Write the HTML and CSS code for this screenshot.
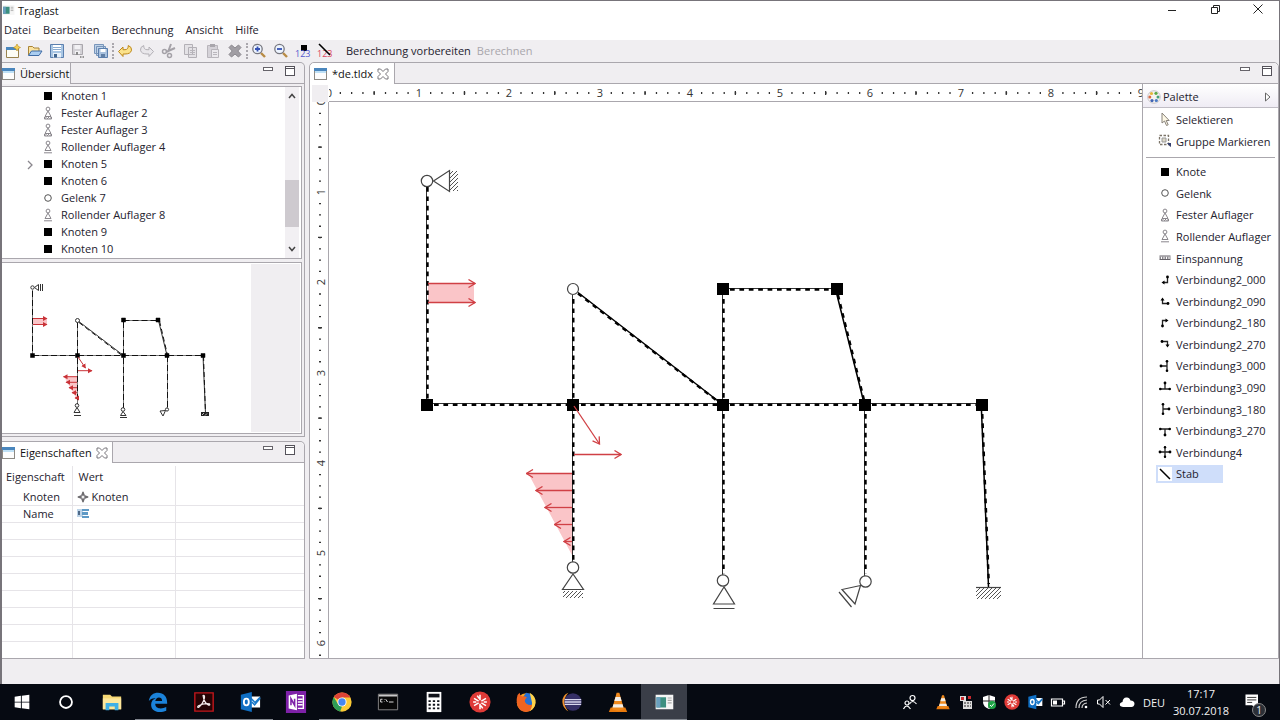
FILE: index.html
```html
<!DOCTYPE html>
<html lang="de">
<head>
<meta charset="utf-8">
<title>Traglast</title>
<link rel="stylesheet" href="styles.css">
</head>
<body>
<svg class="defs" aria-hidden="true">
  <defs>
    <symbol id="view" viewBox="0 0 14 14"><rect x=".5" y="1.5" width="12" height="11" fill="#fdfdfd" stroke="#8d8a84"/><path d="M0 1h13v3H0z" fill="#4a86bd"/><path d="M1 4h11v2H1z" fill="#bfe0f5"/></symbol>
    <symbol id="close-x" viewBox="0 0 12 12"><path d="M1 1h2.500l2.500 2.500L8.500 1H11v2.500L8.500 6 11 8.500V11H8.500L6 8.500 3.500 11H1V8.500L3.500 6 1 3.500z" fill="#fff" stroke="#77747a"/></symbol>
    <symbol id="min" viewBox="0 0 12 12"><rect x="1.500" y="2.500" width="9" height="3" fill="#fff" stroke="#66636a"/></symbol>
    <symbol id="max" viewBox="0 0 12 12"><rect x="1.500" y="1.500" width="9" height="9" fill="#fff" stroke="#55525a"/><path d="M1 3.500h10" stroke="#55525a"/></symbol>
    <symbol id="knoten" viewBox="0 0 14 14"><path d="M3 3h8v8H3z"/></symbol>
    <symbol id="gelenk" viewBox="0 0 14 14"><circle cx="7" cy="7" r="3.300" fill="#fff" stroke="#555"/></symbol>
    <symbol id="fest" viewBox="0 0 14 14"><g fill="none" stroke="#8a878d"><circle cx="7" cy="3" r="1.900"/><path d="M7 5 4 10.500h6zM3.500 13l2-2M6 13l2-2M8.500 13l2-2M3.500 11v2h7v-2"/></g></symbol>
    <symbol id="roll" viewBox="0 0 14 14"><g fill="none" stroke="#8a878d"><circle cx="7" cy="3" r="1.900"/><path d="M7 5 4 10.500h6zM3 12.800h8"/></g></symbol>
    <symbol id="einsp" viewBox="0 0 14 14"><path d="M1.500 5h11M1.500 8.500h11" stroke="#66636a"/><path d="M1.500 6.800h11" stroke="#8a878d" stroke-width="2.500" stroke-dasharray="1.500 1"/></symbol>
    <symbol id="v2" viewBox="0 0 14 14"><path d="M9.500 4v5.500H5" fill="none" stroke="#222" stroke-width="1.300"/><circle cx="9.500" cy="4" r="1.400"/><path d="M6.500 7.500v4L3.500 9.500z"/></symbol>
    <symbol id="v3" viewBox="0 0 14 14"><path d="M9 2v10M3 7h6" stroke="#222" stroke-width="1.300"/><circle cx="9" cy="2.300" r="1.300"/><circle cx="9" cy="11.700" r="1.300"/><circle cx="3" cy="7" r="1.400"/></symbol>
    <symbol id="v4" viewBox="0 0 14 14"><path d="M7 1.500v11M1 7h12" stroke="#222" stroke-width="1.300"/><circle cx="7" cy="2.200" r="1.200"/><circle cx="7" cy="11.800" r="1.200"/><circle cx="2" cy="7" r="1.400"/><circle cx="12" cy="7" r="1.400"/></symbol>
    <symbol id="vlc" viewBox="0 0 24 24"><path d="M4 18h16l2 5H2z" fill="#e8790c"/><path d="M10.500 2h3l5 18q-6.500 3-13 0z" fill="#f08a1d"/><path d="M9.300 6.500h5.400l1.200 4.500H8zM7 14.500h10l1 3.500H6z" fill="#f3efe9"/></symbol>
    <symbol id="starred" viewBox="0 0 24 24"><circle cx="12" cy="12" r="11.500" fill="#df3a37"/><path d="M12 4v6M5.500 8l5 3M18.500 8l-5 3M12 14v6M5.500 16l5-3M18.500 16l-5-3M9 5l2 3M15 19l-2-3M4.500 12H8M16 12h3.500" stroke="#fff" stroke-width="1.700"/></symbol>
    <symbol id="outlook" viewBox="0 0 24 24"><path d="M12 6h11v12H12z" fill="#fff"/><path d="M12 7l5.500 5.500L23 7M14 12l3 3 6-7" fill="none" stroke="#1979ca" stroke-width="1.700"/><path d="M2 4 14 1v22L2 20z" fill="#0f6fc4"/><ellipse cx="8" cy="12" rx="2.700" ry="3.700" fill="none" stroke="#fff" stroke-width="2"/></symbol>
    <symbol id="app" viewBox="0 0 24 20"><path d="M1 1h22v18H1z" fill="#f5f5f5"/><path d="M2 4h12v13H2z" fill="#3c8f80"/><path d="M2 4h5v13H2z" fill="#6a9fbf"/><path d="M16 5h5M16 8h5M16 11h5" stroke="#aaa" stroke-width="1.500"/></symbol>
    <marker id="tip" viewBox="0 0 9 10" refX="8" refY="5" markerWidth="9" markerHeight="10" markerUnits="userSpaceOnUse" orient="auto"><path d="M1.500 1 8 5 1.500 9" fill="none" stroke="#d04045" stroke-width="1.300"/></marker>
    <marker id="tip-small" viewBox="0 0 5 6" refX="4" refY="3" markerWidth="5" markerHeight="6" markerUnits="userSpaceOnUse" orient="auto"><path d="M0 .500 4.500 3 0 5.500z" fill="#c93237"/></marker>
    <pattern id="hatch" width="4" height="4" patternUnits="userSpaceOnUse"><path d="M-1 1l2-2M0 4l4-4M3 5l2-2" stroke="#555"/></pattern>
  </defs>
</svg>

<div class="window">
  <header class="titlebar">
    <svg class="app-icon"><use href="#app"/></svg>
    <h1 class="title">Traglast</h1>
    <div class="window-controls">
      <button class="wc" aria-label="Minimieren"><svg viewBox="0 0 12 12"><path d="M2 7.500h8" stroke="#222"/></svg></button>
      <button class="wc" aria-label="Wiederherstellen"><svg viewBox="0 0 12 12"><path d="M2.500 4.500h6v6h-6zM4.500 4V2.500h6v6H9" fill="none" stroke="#222"/></svg></button>
      <button class="wc" aria-label="Schließen"><svg viewBox="0 0 12 12"><path d="M1.500 1.500l9 9M10.500 1.500l-9 9" stroke="#222"/></svg></button>
    </div>
  </header>

  <nav class="menubar">
    <button>Datei</button><button>Bearbeiten</button><button>Berechnung</button><button>Ansicht</button><button>Hilfe</button>
  </nav>

  <div class="toolbar">
    <button class="tool" aria-label="Neu"><svg viewBox="0 0 16 16"><path d="M1.500 4.500h12v10h-12z" fill="#fdfdf6" stroke="#99834f"/><path d="M1 4h11v3H1z" fill="#4a86bd"/><path d="M12 1l1.200 2.300L15.500 4.500l-2.300 1.200L12 8l-1.200-2.300L8.500 4.500l2.300-1.200z" fill="#f3cf55" stroke="#b98b20" stroke-width=".6"/></svg></button>
    <button class="tool" aria-label="Öffnen"><svg viewBox="0 0 16 16"><path d="M1.500 12V3.500h4L7 5h5v3" fill="#fbe3a0" stroke="#a98436"/><path d="M1.500 12.500 4.500 8h10.500l-3 4.500z" fill="#aacdf0" stroke="#3f6ca5"/></svg></button>
    <button class="tool" aria-label="Speichern"><svg viewBox="0 0 16 16"><path d="M1.500 1.500h13v13h-13z" fill="#a9c6e4" stroke="#5b7fae"/><path d="M4 2h8v6H4z" fill="#fff"/><path d="M4 4.500h8M4 6.500h8" stroke="#8aabd0"/><path d="M4 10h8v4.500H4z" fill="#e8f0f8"/><path d="M5 11h3v3.500H5z" fill="#41658f"/></svg></button>
    <button class="tool" aria-label="Speichern unter" disabled><svg viewBox="0 0 16 16"><path d="M1.500 1.500h10v10h-10z" fill="#d3d1d6" stroke="#aaa7ad"/><path d="M3.500 2h6v4h-6zM4 8h5v3H4z" fill="#f2f1f4"/><path d="M5 9h2v3H5z" fill="#888"/><path d="M9 14h5" stroke="#777" stroke-width="1.500" stroke-dasharray="1.500 1"/></svg></button>
    <button class="tool" aria-label="Alle speichern"><svg viewBox="0 0 16 16"><path d="M1.500 1.500h9v9h-9zM3.500 3.500h9v9h-9z" fill="#bfd2e8" stroke="#7895ba"/><path d="M5.500 5.500h9v9h-9z" fill="#a9c1de" stroke="#5b7fae"/><path d="M7.500 6h5v3h-5z" fill="#fff"/><path d="M8 11h4v3.500H8z" fill="#607fa6"/></svg></button>
    <span class="tool-sep"></span>
    <button class="tool" aria-label="Rückgängig"><svg viewBox="0 0 16 16"><path d="M1.500 8.500 6 4v2.700h2q3.300 0 3.300-4.200 3.700 1.500 3.200 4.700-.800 3.800-6.500 3.800H6v2.500z" fill="#fbe28b" stroke="#bd8719"/></svg></button>
    <button class="tool" aria-label="Wiederholen" disabled><svg viewBox="0 0 16 16"><path d="M14.500 8.500 10 4v2.700H8Q4.700 6.700 4.700 2.500 1 4 1.500 7.200 2.300 11 8 11h2v2.500z" fill="#e9e7eb" stroke="#b3b0b6"/></svg></button>
    <button class="tool" aria-label="Ausschneiden" disabled><svg viewBox="0 0 16 16"><path d="M10 1 7 9M14 5 5 9" stroke="#a5a2a8" stroke-width="2"/><g fill="none" stroke="#a5a2a8" stroke-width="1.500"><circle cx="3.500" cy="8.500" r="2"/><circle cx="8.500" cy="12.500" r="2"/></g></svg></button>
    <button class="tool" aria-label="Kopieren" disabled><svg viewBox="0 0 16 16"><path d="M1.500 1.500h8v10h-8zM5.500 4.500h8v10h-8z" fill="#e4e2e6" stroke="#b3b0b6"/><path d="M7 7.500h5M7 9.500h5M7 11.500h5" stroke="#b9b6bc"/></svg></button>
    <button class="tool" aria-label="Einfügen" disabled><svg viewBox="0 0 16 16"><path d="M2.500 2.500h10v12h-10z" fill="#d5d2d8" stroke="#b8b5bb"/><path d="M5 1h5v3H5z" fill="#a9a6ac"/><path d="M6.500 6.500h7v8h-7z" fill="#ebe9ed" stroke="#b8b5bb"/><path d="M8 9.500h4M8 11.500h4" stroke="#b9b6bc"/></svg></button>
    <button class="tool" aria-label="Löschen" disabled><svg viewBox="0 0 16 16"><path d="M2 4.500 4.500 2 8 5l3.500-3L14 4.500 10.800 8 14 11.500 11.500 14 8 11l-3.500 3L2 11.500 5.200 8z" fill="#a19ea4" stroke="#8b888e"/></svg></button>
    <span class="tool-sep"></span>
    <button class="tool" aria-label="Vergrößern"><svg viewBox="0 0 16 16"><path d="M10 10l4 4" stroke="#b88b45" stroke-width="2.400"/><circle cx="6.500" cy="6" r="4.700" fill="#edf4ff" stroke="#77777f" stroke-width="1.300"/><path d="M4 6h5M6.500 3.500v5" stroke="#3652b5" stroke-width="1.800"/></svg></button>
    <button class="tool" aria-label="Verkleinern"><svg viewBox="0 0 16 16"><path d="M10 10l4 4" stroke="#b88b45" stroke-width="2.400"/><circle cx="6.500" cy="6" r="4.700" fill="#edf4ff" stroke="#77777f" stroke-width="1.300"/><path d="M4 6h5" stroke="#3652b5" stroke-width="1.800"/></svg></button>
    <button class="tool" aria-label="Knotennummern"><svg viewBox="0 0 16 16"><path d="M6 2h6v6H6z"/><text class="num blue" x="0" y="14">123</text></svg></button>
    <button class="tool" aria-label="Stabnummern"><svg viewBox="0 0 16 16"><text class="num red" x="0" y="14">123</text><path d="M2 1l11 11" stroke="#000" stroke-width="1.600"/></svg></button>
    <button class="tool-text">Berechnung vorbereiten</button>
    <button class="tool-text second" disabled>Berechnen</button>
  </div>

  <main class="workbench">
    <div class="side">
      <section class="panel overview">
        <div class="tabs"><div class="tab"><svg class="i14"><use href="#view"/></svg><span>Übersicht</span></div>
          <div class="tab-tools"><button aria-label="Minimieren"><svg><use href="#min"/></svg></button><button aria-label="Maximieren"><svg><use href="#max"/></svg></button></div></div>
        <div class="tree-box">
          <ul class="tree" role="tree">
            <li role="treeitem"><svg class="i14"><use href="#knoten"/></svg>Knoten 1</li>
            <li role="treeitem"><svg class="i14"><use href="#fest"/></svg>Fester Auflager 2</li>
            <li role="treeitem"><svg class="i14"><use href="#fest"/></svg>Fester Auflager 3</li>
            <li role="treeitem"><svg class="i14"><use href="#roll"/></svg>Rollender Auflager 4</li>
            <li role="treeitem" aria-expanded="false"><svg class="twisty" viewBox="0 0 8 10"><path d="M2 1l4 4-4 4" fill="none" stroke="#8a878d" stroke-width="1.300"/></svg><svg class="i14"><use href="#knoten"/></svg>Knoten 5</li>
            <li role="treeitem"><svg class="i14"><use href="#knoten"/></svg>Knoten 6</li>
            <li role="treeitem"><svg class="i14"><use href="#gelenk"/></svg>Gelenk 7</li>
            <li role="treeitem"><svg class="i14"><use href="#roll"/></svg>Rollender Auflager 8</li>
            <li role="treeitem"><svg class="i14"><use href="#knoten"/></svg>Knoten 9</li>
            <li role="treeitem"><svg class="i14"><use href="#knoten"/></svg>Knoten 10</li>
          </ul>
          <div class="scrollbar">
            <svg viewBox="0 0 14 16"><path d="M4 11l3-3.500 3 3.500" fill="none" stroke="#444" stroke-width="1.500"/></svg>
            <div class="track"><div class="thumb"></div></div>
            <svg viewBox="0 0 14 16"><path d="M4 5l3 3.500L10 5" fill="none" stroke="#444" stroke-width="1.500"/></svg>
          </div>
        </div>
        <div class="mini-box">
          <svg class="mini" role="img" aria-label="Miniaturansicht des Tragwerks"><g transform="translate(-2 -263)">
            <g fill="#fac5c8"><path d="M33 318.500h14v6H33zM77.500 376.500H64l13.500 24z"/></g>
            <g stroke="#777" fill="none"><path d="M32.500 290v65.500M32.500 355.500h170.500M77.500 320.500V406M123.500 355.500V320.500h35M123.500 355.500V409M167.500 355.500V409"/></g>
            <g stroke="#111" fill="none" stroke-dasharray="6 3"><path d="M32.500 291v64M33 355.500h170M77.500 322v83M123.500 320.500h35M123.500 322v87M167.500 356v53"/></g>
            <path d="M77.500 320.500l46 35M158.500 320.500l8.500 35M203 355.500l2.500 58" stroke="#333"/>
            <path d="M79 322.500l43 33M159.500 321l8 34M203.500 356l2 57" stroke="#111" stroke-dasharray="5 3"/>
            <path d="M30.500 353.500h4v4h-4zM75.500 353.500h4v4h-4zM121.500 353.500h4v4h-4zM165 353.500h4v4h-4zM201 353.500h4v4h-4zM121.500 318h4v4h-4zM156 318h4v4h-4z" stroke="#000" stroke-width=".5"/>
            <g stroke="#c93237"><path d="M33 318.500h14" marker-end="url(#tip-small)"/><path d="M33 324.500h14" marker-end="url(#tip-small)"/><path d="M78 357l7.500 11" marker-end="url(#tip-small)"/><path d="M78 370.700h14" marker-end="url(#tip-small)"/><path d="M77 376.700H63.500" marker-end="url(#tip-small)"/><path d="M77 382.300H66" marker-end="url(#tip-small)"/><path d="M77 387.700h-8" marker-end="url(#tip-small)"/><path d="M77 392.700h-5" marker-end="url(#tip-small)"/><path d="M77 398h-2" marker-end="url(#tip-small)"/></g>
            <g stroke="#333" fill="#fff"><circle cx="77.500" cy="320.500" r="2"/><circle cx="32.500" cy="287.500" r="1.700"/><path d="M34.500 287.500l4-3v6zM40.500 284v7M42.500 284v7"/><circle cx="77" cy="405.500" r="1.800"/><path d="M77 407.500l-3 5h6zM74 415.500h7"/><circle cx="123" cy="409.500" r="1.800"/><path d="M123 411.500l-2.500 4h5.500zM120 417.500h7"/><circle cx="167" cy="409.500" r="1.600"/><path d="M165.500 410.500l-5.500.5 3 5z"/></g>
            <path d="M201 412h8v4h-8z" fill="#222"/><path d="M202 415l2-2M205 415.500l2-2" stroke="#fff" stroke-width=".7"/>
          </g></svg>
          <div class="mini-rest"></div>
        </div>
      </section>

      <section class="panel properties">
        <div class="tabs"><div class="tab"><svg class="i14"><use href="#view"/></svg><span>Eigenschaften</span><button class="tab-close" aria-label="Schließen"><svg><use href="#close-x"/></svg></button></div>
          <div class="tab-tools"><button aria-label="Minimieren"><svg><use href="#min"/></svg></button><button aria-label="Maximieren"><svg><use href="#max"/></svg></button></div></div>
        <table class="props">
          <colgroup><col class="c-key"><col class="c-val"><col></colgroup>
          <thead><tr><th>Eigenschaft</th><th>Wert</th><th></th></tr></thead>
          <tbody>
            <tr><td>Knoten</td><td><svg class="i14" viewBox="0 0 14 14"><path d="M7 1l2 4 4 2-4 2-2 4-2-4-4-2 4-2z" fill="#88858b"/><path d="M7 2v10M2 7h10" stroke="#555"/><circle cx="7" cy="7" r="1.500" fill="#eee"/></svg>Knoten</td><td></td></tr>
            <tr><td>Name</td><td><svg class="i14" viewBox="0 0 14 14"><path d="M1 2h6v8H1z" fill="#bcd3e8"/><path d="M6 2h7v2H6zM6 5h6v3H6zM6 9h7v2H6z" fill="#5f9ac6"/><path d="M3 4v4" stroke="#2a4668" stroke-width="1.500"/></svg></td><td></td></tr>
            <tr><td></td><td></td><td></td></tr><tr><td></td><td></td><td></td></tr><tr><td></td><td></td><td></td></tr><tr><td></td><td></td><td></td></tr><tr><td></td><td></td><td></td></tr><tr><td></td><td></td><td></td></tr><tr><td></td><td></td><td></td></tr><tr class="last"><td></td><td></td><td></td></tr>
          </tbody>
        </table>
      </section>
    </div>

    <section class="panel editor">
      <div class="tabs"><div class="tab"><svg class="i14"><use href="#view"/></svg><span>*de.tldx</span><button class="tab-close" aria-label="Schließen"><svg><use href="#close-x"/></svg></button></div>
        <div class="tab-tools"><button aria-label="Minimieren"><svg><use href="#min"/></svg></button><button aria-label="Maximieren"><svg><use href="#max"/></svg></button></div></div>
      <div class="editor-body">
        <div class="corner"></div>
        <svg class="ruler-h" aria-hidden="true">
          <path d="M10.700 9H900" stroke="#333" stroke-width="2" stroke-dasharray="1.300 9.990"/>
          <path d="M44.500 9H900" stroke="#333" stroke-width="4" stroke-dasharray="1.300 89"/>
          <g class="mask"><path d="M85 3h11v12H85zM175 3h11v12h-11zM265 3h11v12h-11zM356 3h11v12h-11zM446 3h11v12h-11zM536 3h11v12h-11zM627 3h11v12h-11zM717 3h11v12h-11zM806 3h11v12h-11z"/></g>
          <g class="ticks"><text x="0" y="13">0</text><text x="90" y="13">1</text><text x="180" y="13">2</text><text x="271" y="13">3</text><text x="361" y="13">4</text><text x="451" y="13">5</text><text x="541" y="13">6</text><text x="632" y="13">7</text><text x="722" y="13">8</text><text x="812" y="13">9</text></g>
        </svg>
        <svg class="ruler-v" aria-hidden="true">
          <path d="M10 10.700V700" stroke="#333" stroke-width="2" stroke-dasharray="1.300 9.990"/>
          <path d="M10 44.500V700" stroke="#333" stroke-width="4" stroke-dasharray="1.300 89"/>
          <g class="mask"><path d="M2 85h14v11H2zM2 175h14v11H2zM2 265h14v11H2zM2 356h14v11H2zM2 446h14v11H2zM2 536h14v11H2z"/></g>
          <g class="ticks" transform="rotate(-90)"><text x="0" y="15">0</text><text x="-90" y="15">1</text><text x="-180" y="15">2</text><text x="-271" y="15">3</text><text x="-361" y="15">4</text><text x="-451" y="15">5</text><text x="-541" y="15">6</text></g>
        </svg>
        <svg class="canvas" role="img" aria-label="Tragwerk"><g transform="translate(-329 -102)">
          <g fill="#fac5c8"><path d="M428 283h46v19h-46zM573 473h-45l44 82z"/></g>
          <g stroke="#333" stroke-width="1">
            <path d="M426.500 187v212M433 403.500h543M572.500 295v267M723 288.500h108M722.500 295v280M864.500 411v166" fill="none"/>
          </g>
          <path d="M578 292.500l142 110M836.500 293l27 108M981.500 411l7 176" stroke="#000" stroke-width="1.500"/>
          <g fill="none" stroke="#000" stroke-width="2.400" stroke-dasharray="4.700 4.700">
            <path d="M427.500 187v212M434 404.800h134M581 404.800h136M730 404.800h129M872 404.800h105M573.300 299v102M573.300 414v146M723.500 299v102M723.500 414v160M730 289.500h101M865.500 414v160"/>
            <path d="M578 293.500l140 108M838 295l26 105M982.300 414l6.500 170"/>
          </g>
          <path d="M421 399h12v12h-12zM567 399h12v12h-12zM717 399h12v12h-12zM859 399h12v12h-12zM976 399h12v12h-12zM717 283h12v12h-12zM831 283h12v12h-12z"/>
          <g stroke="#d04045" stroke-width="1.300" fill="none">
            <path d="M428 283.500h47" marker-end="url(#tip)"/><path d="M428 302.500h47" marker-end="url(#tip)"/>
            <path d="M574 406l25.500 38" marker-end="url(#tip)"/><path d="M574 454.500h47" marker-end="url(#tip)"/>
            <path d="M572 473.500h-45.500" marker-end="url(#tip)"/><path d="M572 490.500h-36" marker-end="url(#tip)"/><path d="M572 507.500h-27" marker-end="url(#tip)"/><path d="M572 524.500h-17.500" marker-end="url(#tip)"/><path d="M572 541.500h-8" marker-end="url(#tip)"/>
          </g>
          <g fill="#fff" stroke="#444" stroke-width="1.200">
            <circle cx="427" cy="181" r="5.700"/><path d="M433.500 181l16-10.500v21z"/>
            <circle cx="573" cy="289" r="5.500"/>
            <circle cx="573" cy="567.500" r="5.700"/><path d="M573 574l-10.500 15.500h21z"/>
            <circle cx="723" cy="580.500" r="5.700"/><path d="M724 587l-10.500 17h21zM713.500 608.500h21"/>
            <path d="M860.500 585.500l-18.500 4 13 14.500zM839 592l12.500 15"/><circle cx="865.500" cy="581.500" r="5.700"/>
            <path d="M976 587.500h25"/>
          </g>
          <path d="M450 171h8v20h-8zM563 591h20v7h-20zM976 588h25v11h-25z" fill="url(#hatch)"/>
        </g></svg>
        <aside class="palette">
          <div class="palette-head"><svg class="i14" viewBox="0 0 14 14"><circle cx="7" cy="7" r="6.300" fill="#f5f3ef" stroke="#c9c6cc"/><circle cx="4.500" cy="3.500" r="1.600" fill="#e2b73b"/><circle cx="9" cy="3.300" r="1.600" fill="#5daa48"/><circle cx="11" cy="7" r="1.500" fill="#43a078"/><circle cx="9.300" cy="10.500" r="1.600" fill="#4979c5"/><circle cx="5" cy="10.600" r="1.600" fill="#3f62b3"/><circle cx="2.800" cy="7" r="1.500" fill="#d96a45"/></svg><span>Palette</span><button aria-label="Palette einklappen"><svg viewBox="0 0 8 10"><path d="M1.500 1v8l4.500-4z" fill="#fff" stroke="#666"/></svg></button></div>
          <div class="palette-tools">
            <button><svg class="i14" viewBox="0 0 14 14"><path d="M4 1v10l2.500-2 2 4.500 1.700-.7-2-4.300h3z" fill="#fdf8e6" stroke="#88827a"/></svg>Selektieren</button>
            <button><svg class="i14" viewBox="0 0 14 14"><path d="M1.500 1.500h9v9h-9z" fill="none" stroke="#7c7468" stroke-width="1.300" stroke-dasharray="2.500 1.500"/><path d="M4 4h4v4H4z" fill="#ddd8c8" stroke="#999"/><path d="M9 9h4v4l-1.500-1z" fill="#35406e"/></svg>Gruppe Markieren</button>
          </div>
          <div class="palette-list">
            <button><svg class="i14"><use href="#knoten"/></svg>Knote</button>
            <button><svg class="i14"><use href="#gelenk"/></svg>Gelenk</button>
            <button><svg class="i14"><use href="#fest"/></svg>Fester Auflager</button>
            <button><svg class="i14"><use href="#roll"/></svg>Rollender Auflager</button>
            <button><svg class="i14"><use href="#einsp"/></svg>Einspannung</button>
            <button><svg class="i14"><use href="#v2"/></svg>Verbindung2_000</button>
            <button><svg class="i14 r90"><use href="#v2"/></svg>Verbindung2_090</button>
            <button><svg class="i14 r180"><use href="#v2"/></svg>Verbindung2_180</button>
            <button><svg class="i14 r270"><use href="#v2"/></svg>Verbindung2_270</button>
            <button><svg class="i14"><use href="#v3"/></svg>Verbindung3_000</button>
            <button><svg class="i14 r90"><use href="#v3"/></svg>Verbindung3_090</button>
            <button><svg class="i14 r180"><use href="#v3"/></svg>Verbindung3_180</button>
            <button><svg class="i14 r270"><use href="#v3"/></svg>Verbindung3_270</button>
            <button><svg class="i14"><use href="#v4"/></svg>Verbindung4</button>
            <button class="selected" aria-pressed="true"><svg class="i14" viewBox="0 0 14 14"><path d="M2 2l10 10" stroke="#000" stroke-width="1.500"/></svg>Stab</button>
          </div>
        </aside>
      </div>
    </section>
  </main>
  <footer class="statusbar"></footer>
</div>

<nav class="taskbar">
  <button class="start" aria-label="Start"><svg viewBox="0 0 24 24"><path d="M4 6.300l6.800-1v6.300H4zM11.800 5.200 20 4v7.600h-8.200zM4 12.500h6.800v6.300L4 17.800zM11.800 12.500H20V20l-8.200-1.200z" fill="#fff"/></svg></button>
  <button aria-label="Cortana"><svg viewBox="0 0 24 24"><circle cx="12" cy="12" r="6.500" fill="none" stroke="#fff" stroke-width="2"/></svg></button>
  <button aria-label="Explorer"><svg viewBox="0 0 24 24"><path d="M2 4h8l2 2h10v14H2z" fill="#f6d874"/><path d="M2 8h20v12H2z" fill="#fde79b"/><path d="M5 13h14v8h-4v-4H9v4H5z" fill="#40b0e6"/></svg></button>
  <button class="run" aria-label="Edge"><svg viewBox="0 0 24 24"><path d="M2 11C3 4.500 7 2 12 2c6 0 10 4 10 11v1H9c0 4 3 5 6 5 2 0 4-.5 6-1.500v4C19 22.500 16.500 23 14 23c-6 0-9.500-3.500-9.500-8 0-3.500 2-6 5-7-3.500-.5-6 1-7.500 3zm7 0h7.500c0-3-1.500-4-3.500-4s-3.500 1.500-4 4z" fill="#1b83da"/></svg></button>
  <button class="run" aria-label="Acrobat"><svg viewBox="0 0 24 24"><path d="M2 2h20v20H2z" fill="#250405" stroke="#c4171c" stroke-width="1.500"/><path d="M11 5q2-1 1.500 2.500Q11 14 6 18q-2 0 0-2 6-3 12-2 1 1.500-1 1.500Q12 13 11 5z" fill="none" stroke="#f3eaea" stroke-width="1.300"/></svg></button>
  <button class="run" aria-label="Outlook"><svg><use href="#outlook"/></svg></button>
  <button aria-label="OneNote"><svg viewBox="0 0 24 24"><path d="M1 0h22v24H1z" fill="#7e21a8"/><path d="M4 5l9-2v18l-9-2z" fill="#fff"/><path d="M6.500 15.500v-7l4 7v-7" fill="none" stroke="#7e21a8" stroke-width="1.700"/><path d="M14 5h6v14h-6M14 9h5M14 12h5M14 15h5" fill="none" stroke="#fff" stroke-width="1.500"/></svg></button>
  <button class="run" aria-label="Chrome"><svg viewBox="0 0 24 24"><circle cx="12" cy="12" r="10.500" fill="#fbca35"/><path d="M12 12 3 6.600A10.500 10.500 0 0 1 21.200 7H12z" fill="#dc4437"/><path d="M3 6.600 7.700 14.500 12 17l-2 5.300A10.500 10.500 0 0 1 3 6.600z" fill="#2e9e57"/><circle cx="12" cy="12" r="5" fill="#fff"/><circle cx="12" cy="12" r="4" fill="#4587f0"/></svg></button>
  <button class="run" aria-label="Eingabeaufforderung"><svg viewBox="0 0 24 24"><path d="M1.500 3.500h21v17h-21z" fill="#080808" stroke="#8b8b8b"/><path d="M2 4h20v2H2z" fill="#c9c9c9"/><path d="M4 9h2M4 9v3h2M8 9v.500M8 11.500v.500M9.500 9l2 3M13 12h5" stroke="#eee" fill="none"/></svg></button>
  <button class="run" aria-label="Rechner"><svg viewBox="0 0 24 24"><path d="M4 1h16v22H4z" fill="#fff"/><path d="M6 3h12v4H6z" fill="#10131a"/><path d="M6 11h12M6 15h12M6 19h12" stroke="#10131a" stroke-width="2" stroke-dasharray="2.500 2.200"/></svg></button>
  <button class="run" aria-label="Aufnahme"><svg><use href="#starred"/></svg></button>
  <button class="run" aria-label="Firefox"><svg viewBox="0 0 24 24"><circle cx="12" cy="12.500" r="10" fill="#f8a522"/><path d="M12 2q9 1 10 9-1 4-6 5-7-2-8-8z" fill="#2571d4"/><path d="M2 8q0-4 3-6 0 3 3 4 2-1 5 1-3 2-2 5 2 4 7 3 3-2 3-5 2 6-2 10-6 5-13 1Q1 16 2 8z" fill="#ef6421"/><path d="M16 2q7 4 6.500 11-1 6-6.500 9 4-6 2-12z" fill="#ffd34a"/></svg></button>
  <button class="run" aria-label="Eclipse"><svg viewBox="0 0 24 24"><path d="M8 2Q1 5 1.500 12T8 22Q4 18 4 12T8 2z" fill="#f2922c"/><circle cx="13" cy="12" r="9.500" fill="#352f66"/><path d="M4 9.500h18M4 12h18M4 14.500h18" stroke="#d9d8ee" stroke-width="1.400"/></svg></button>
  <button class="run" aria-label="VLC"><svg><use href="#vlc"/></svg></button>
  <button class="run active" aria-label="Traglast"><svg viewBox="0 0 24 24"><use href="#app" x="2" y="3" width="21" height="18"/></svg></button>

  <div class="tray">
    <button class="people" aria-label="Kontakte"><svg viewBox="0 0 16 16"><g fill="none" stroke="#fff" stroke-width="1.200"><circle cx="10.500" cy="4" r="2.500"/><path d="M7.500 10q3-5 7 0"/><circle cx="5" cy="9" r="2"/><path d="M1.500 15q3-6 7 0"/></g></svg></button>
    <button aria-label="VLC"><svg><use href="#vlc"/></svg></button>
    <button aria-label="Netzwerkdienst"><svg viewBox="0 0 16 16"><path d="M2 2h6v5H2zM5 7h9v8H5z" fill="#ddd"/><path d="M3 3h3v3H3zM10 2h3v3h-3z" fill="#c9282d"/><path d="M6 9h7M6 12h7" stroke="#222" stroke-dasharray="2 1"/></svg></button>
    <button aria-label="Windows Defender"><svg viewBox="0 0 16 16"><path d="M8 1l6 2v5q0 5-6 7-6-2-6-7V3z" fill="#fff"/><path d="M8 1v13M2 7h12" stroke="#222" stroke-width="1"/><circle cx="11" cy="11" r="4" fill="#1fa346"/><path d="M9 11l1.500 1.500L13 9.500" fill="none" stroke="#fff"/></svg></button>
    <button aria-label="Aufnahme"><svg><use href="#starred"/></svg></button>
    <button aria-label="Outlook"><svg><use href="#outlook"/></svg></button>
    <button aria-label="Akku"><svg viewBox="0 0 16 16"><path d="M1.500 5h11v7h-11zM13 7h1.500v3H13" fill="none" stroke="#fff" stroke-width="1.200"/><path d="M3 6.500h4v4H3z" fill="#fff"/></svg></button>
    <button aria-label="WLAN"><svg viewBox="0 0 16 16"><g fill="none" stroke="#ccc" stroke-width="1.200"><path d="M3 14Q3 3 14 3M6 14q0-7.500 8-8M9 14q0-4.500 5-5"/></g><circle cx="13" cy="13" r="1.300" fill="#fff"/></svg></button>
    <button aria-label="Ton aus"><svg viewBox="0 0 16 16"><path d="M1.500 6h2l3.500-3.500v11L3.500 10h-2zM9.500 6l4.500 4.500M14 6l-4.500 4.500" fill="none" stroke="#fff"/></svg></button>
    <button aria-label="OneDrive"><svg viewBox="0 0 16 16"><path d="M4 13Q0 12.500 1 9.500 2 8 3.500 8 4 3 8 3.500q2.500 0 3.500 3 4 0 4 3.500-.5 3-3 3z" fill="#fff"/></svg></button>
    <button class="lang">DEU</button>
    <button class="clock"><span>17:17</span><span>30.07.2018</span></button>
    <button class="notify" aria-label="Info-Center"><svg viewBox="0 0 24 24"><path d="M3 3h15v13h-3v4l-4-4H3z" fill="#fff"/><path d="M5 6.500h11M5 9.500h11M5 12.500h6" stroke="#111"/></svg><span class="badge">1</span></button>
  </div>
</nav>
</body>
</html>
```
FILE: styles.css
```css
* { box-sizing: border-box; }
body {
  margin: 0;
  height: 100vh;
  display: flex;
  flex-direction: column;
  font: 11px/17px "Open Sans", "Noto Sans", sans-serif;
  color: #24222e;
  background: #f0eef1;
  overflow: hidden;
}
.defs { position: absolute; width: 0; height: 0; }
svg { display: block; flex: none; }
button {
  font: inherit;
  color: inherit;
  background: none;
  border: 0;
  padding: 0;
  margin: 0;
  white-space: nowrap;
}
.i14 { width: 14px; height: 14px; }
.r90 { transform: rotate(90deg); }
.r180 { transform: rotate(180deg); }
.r270 { transform: rotate(270deg); }

.window {
  flex: 1;
  min-height: 0;
  display: flex;
  flex-direction: column;
  border: solid #77747a;
  border-width: 1px 1px 0 2px;
}
.titlebar { display: flex; align-items: center; height: 18px; background: #fff; }
.app-icon { width: 13px; height: 12px; }
.title { margin: 0 0 0 3px; font: inherit; color: #111; }
.window-controls { display: flex; margin-left: auto; }
.wc { width: 43px; height: 18px; display: grid; place-items: center; padding-bottom: 3px; }
.wc svg { width: 12px; height: 12px; }
.menubar { display: flex; gap: 12px; height: 21px; padding: 0 0 1px 2px; background: #fff; }
.toolbar { display: flex; align-items: center; height: 21px; }
.tool { width: 22px; display: grid; place-items: center; }
.tool svg { width: 16px; height: 16px; overflow: visible; }
.tool-sep { width: 2px; height: 16px; border-left: 2px dotted #aaa7ad; }
.tool-text { margin: 0 0 0 10px; }
.tool-text.second { margin-left: 6px; }
.tool-text:disabled { color: #a9a6ac; }
.num { font: 9px "Open Sans", sans-serif; }
.blue { fill: #5358cf; }
.red { fill: #dd4660; }

.workbench { flex: 1; min-height: 0; display: flex; gap: 4px; padding-top: 1px; }
.side { width: 303px; display: flex; flex-direction: column; gap: 4px; }
.panel {
  display: flex;
  flex-direction: column;
  min-height: 0;
  border: 1px solid #aaa7ad;
  border-left-width: 0;
  border-radius: 0 5px 0 0;
}
.overview { flex: 376 1 0; }
.properties { flex: 217 1 0; background: #fff; }
.editor { flex: 1; min-width: 0; background: #fff; border-left-width: 1px; border-radius: 5px 5px 0 0; }
.tabs { display: flex; height: 21px; border-radius: 5px 5px 0 0; background: #f0eef1; flex: none; }
.tab {
  display: flex;
  align-items: center;
  gap: 4px;
  padding: 0 1px 0 0;
  background: #fff;
  border-right: 1px solid #aaa7ad;
  color: #111;
}
.overview .tab { background: #f5f4f6; }
.editor .tab { padding-left: 4px; padding-right: 5px; border-radius: 5px 0 0; }
.properties .tab { padding-right: 4px; }
.tab-close svg, .tab-tools svg { width: 12px; height: 12px; }
.tab-tools { flex: 1; display: flex; justify-content: flex-end; align-items: flex-start; gap: 10px; padding: 2px 8px 0 0; border-bottom: 1px solid #aaa7ad; }
.editor .tab-tools { padding-right: 5px; }

.tree-box { flex: 174 1 0; min-height: 0; display: flex; margin: 2px 2px 3px 0; border: 1px solid #aaa7ad; border-left: 0; background: #fff; }
.tree { flex: 1; list-style: none; margin: 0; padding: 0 0 0 39px; }
.tree li { display: flex; align-items: center; gap: 6px; height: 17px; }
.tree li .twisty { width: 8px; height: 10px; margin: 2px 1px 0 -15px; }
.scrollbar { width: 14px; margin-right: 2px; display: flex; flex-direction: column; background: #f2f0f3; }
.scrollbar svg { width: 14px; height: 16px; }
.track { flex: 1; display: flex; flex-direction: column; justify-content: flex-end; padding-bottom: 15px; }
.thumb { height: 47px; background: #cecacf; }
.mini-box { flex: 174 1 0; min-height: 0; display: flex; margin: 0 2px 2px 0; border: 1px solid #aaa7ad; border-left: 0; background: #fff; }
.mini { flex: 1; min-width: 0; height: 100%; }
.mini-rest { width: 49px; margin: 1px; background: #f0eef1; }

.props { table-layout: fixed; width: 100%; margin-top: 3px; border-collapse: collapse; }
.c-key { width: 70px; }
.c-val { width: 103px; }
.props th, .props td { padding: 0; height: 17px; line-height: 16px; border-right: 1px solid #e6e4e8; text-align: left; font-weight: 400; }
.props th { height: 22px; padding-left: 6px; }
.props th:first-child { padding-left: 4px; }
.props th:last-child, .props td:last-child { border-right: 0; }
.props td { border-bottom: 1px solid #e6e4e8; }
.props td:first-child { padding-left: 21px; }
.props td:nth-child(2) { padding-left: 3px; }
.props td .i14 { display: inline-block; margin-right: 2px; vertical-align: -3px; }
.props .last td { border-bottom: 0; }

.editor-body { flex: 1; min-height: 0; display: grid; grid-template: 18px minmax(0, 1fr) / 19px minmax(0, 1fr) 136px; }
.corner { margin: 1px 1px 0 2px; background: #f0eef1; }
.ruler-h { width: 100%; height: 18px; border-bottom: 1px solid #aaa7ad; }
.ruler-v { grid-area: 2 / 1; width: 19px; height: 100%; border-right: 1px solid #aaa7ad; }
.ticks { font: 11px "Open Sans", sans-serif; fill: #333; text-anchor: middle; }
.mask { fill: #fff; }
.canvas { grid-area: 2 / 2; width: 100%; height: 100%; background: #fff; }
.palette { grid-area: 1 / 3 / 3 / 4; border-left: 1px solid #aaa7ad; }
.palette-head { display: flex; align-items: center; gap: 2px; height: 24px; padding: 2px 6px 0 4px; border-bottom: 1px solid #c0bdc5; background: linear-gradient(#fff, #efecf4); }
.palette-head button { margin-left: auto; }
.palette-head button svg { width: 8px; height: 10px; }
.palette-tools { display: grid; grid-auto-rows: 22px; justify-items: start; padding: 0 0 5px 10px; margin: 0 3px; border-bottom: 1px solid #aaa7ad; }
.palette-list { display: grid; grid-auto-rows: 1fr; justify-items: start; height: 324px; margin-top: 3px; padding-left: 13px; }
.palette-tools button, .palette-list button { display: flex; align-items: center; gap: 4px; height: 100%; padding: 0 2px; }
.palette-list .selected { width: 67px; margin: 2px 0; height: 18px; background: #cfdefa; }
.palette-list .selected svg { background: #fff; }
.statusbar { height: 25px; }

.taskbar { display: flex; height: 36px; flex: none; background: #060a12; color: #f2f2f2; }
.taskbar button { width: 46px; display: grid; place-items: center; }
.taskbar .start { width: 43px; }
.taskbar svg { width: 22px; height: 22px; }
.taskbar .run { border-bottom: 1px solid #82878f; }
.taskbar .active { background: #3a3e48; }
.tray { display: flex; margin-left: auto; padding-right: 6px; }
.taskbar .tray button { width: 23px; }
.tray svg { width: 16px; height: 16px; }
.taskbar .tray .people { width: 42px; }
.taskbar .tray .lang { width: 32px; }
.taskbar .tray .clock { width: 62px; align-content: center; line-height: 17px; }
.taskbar .tray .notify { width: 42px; position: relative; }
.tray .notify svg { width: 20px; height: 20px; }
.badge { position: absolute; right: 8px; bottom: 3px; width: 14px; height: 14px; border-radius: 7px; border: 1px solid #888; background: #2b2f36; font-size: 10px; line-height: 12px; }
```
